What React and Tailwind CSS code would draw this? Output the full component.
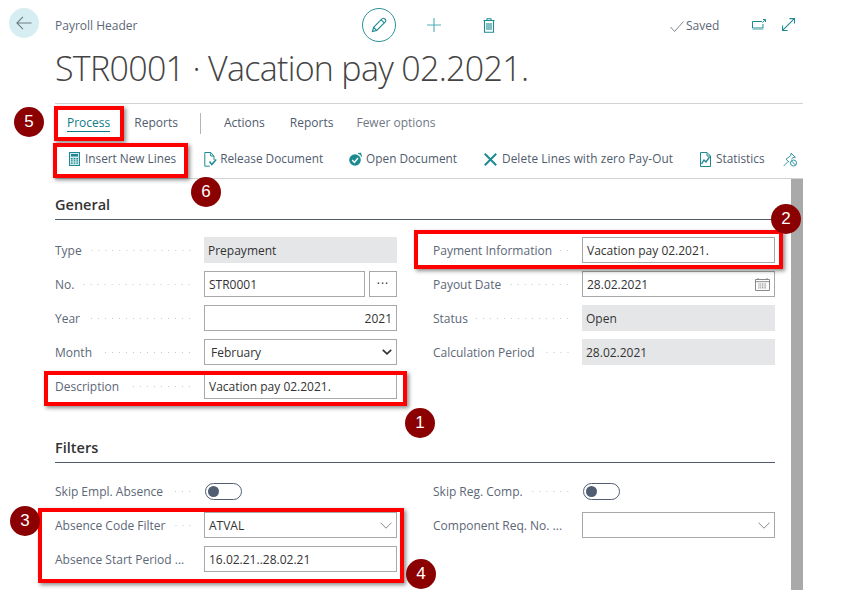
const TEAL = "#1d8a91";

function BackIcon() {
  return (
    <svg width="16" height="14" viewBox="0 0 16 14" fill="none" stroke="#6f7c85" strokeWidth="1.1">
      <path d="M15.5 7H1M7 .8 .9 7 7 13.2" />
    </svg>
  );
}

function PencilIcon() {
  return (
    <svg width="16" height="16" viewBox="0 0 16 16" fill="none" stroke={TEAL} strokeWidth="1.1">
      <path d="M1.5 14.5 2.6 10.3 11.2 1.7a1.6 1.6 0 0 1 2.3 0l.8.8a1.6 1.6 0 0 1 0 2.3L5.7 13.4 1.5 14.5ZM2.6 10.3l3.1 3.1M10.2 2.8l3 3" />
    </svg>
  );
}

function PlusIcon() {
  return (
    <svg width="14" height="14" viewBox="0 0 14 14" fill="none" stroke="#4fb0b5" strokeWidth="1.1">
      <path d="M7 0v14M0 7h14" />
    </svg>
  );
}

function TrashIcon() {
  return (
    <svg width="12" height="15" viewBox="0 0 12 15" fill="none" stroke={TEAL} strokeWidth="1.1">
      <path d="M.5 2.5h11M4 2.5V.8h4v1.7M1.5 2.5v11.7h9V2.5M4 5v7M6 5v7M8 5v7" />
    </svg>
  );
}

function ShareIcon() {
  return (
    <svg width="14" height="11" viewBox="0 0 14 11" fill="none" stroke={TEAL} strokeWidth="1">
      <path d="M10 2.500H.5v6.500h10.500V5" />
      <path d="M.5 10.500h11" stroke="#9fd0d3" />
      <path d="M10.500 3.500 13 .8M11 .5h2.500V3" />
    </svg>
  );
}

function ExpandIcon() {
  return (
    <svg width="13" height="13" viewBox="0 0 13 13" fill="none" stroke={TEAL} strokeWidth="1.1">
      <path d="M.8 12.200 12.200.8M7.500.6h5v5M.6 7.500v5h5" />
    </svg>
  );
}

function CalcIcon() {
  return (
    <svg width="11" height="14" viewBox="0 0 11 14" fill="none">
      <rect x=".5" y=".5" width="10" height="13" fill="#d3e8ea" stroke={TEAL} />
      <rect x="2" y="2" width="7" height="2.500" fill={TEAL} />
      <path d="M2 6h1.600v1.400H2zM4.700 6h1.600v1.400H4.700zM7.400 6H9v1.400H7.400zM2 8.200h1.600v1.400H2zM4.700 8.200h1.600v1.400H4.700zM7.400 8.200H9v1.400H7.400zM2 10.400h1.600v1.400H2zM4.700 10.400h1.600v1.400H4.700zM7.400 10.400H9v1.400H7.400z" fill={TEAL} />
    </svg>
  );
}

function ReleaseIcon() {
  return (
    <svg width="13" height="15" viewBox="0 0 13 15" fill="none" stroke={TEAL} strokeWidth="1">
      <path d="M10 8V4L6.700.5H.8v13.700h5M6.700.5V4H10" />
      <path d="m5.500 9.500 2.300 3 4.400-5" strokeWidth="1.500" />
    </svg>
  );
}

function OpenDocIcon() {
  return (
    <svg width="14" height="14" viewBox="0 0 14 14" fill="none">
      <circle cx="6" cy="8" r="5.800" fill={TEAL} />
      <path d="m3.200 8 2.200 2.400L9 6" stroke="#fff" strokeWidth="1.400" />
      <path d="M9 1.500a3 3 0 0 1 3.500 3" stroke={TEAL} strokeWidth="1.200" />
      <path d="m11 .2 1.600 1.600-1.800 1" fill={TEAL} />
    </svg>
  );
}

function DeleteIcon() {
  return (
    <svg width="13" height="13" viewBox="0 0 13 13" fill="none" stroke={TEAL} strokeWidth="2">
      <path d="m.8.8 11.400 11.400M12.200.8.8 12.200" />
    </svg>
  );
}

function StatsIcon() {
  return (
    <svg width="11" height="15" viewBox="0 0 11 15" fill="none" stroke={TEAL} strokeWidth="1">
      <path d="M.5.5h6.500L10.500 4v10.500H.5z" />
      <path d="M7 .5V4h3.500" />
      <path d="m1.500 12 2.500-4 2 2 3.500-5" strokeWidth="1.400" />
    </svg>
  );
}

function PinIcon() {
  return (
    <svg width="14" height="15" viewBox="0 0 14 15" fill="none" stroke={TEAL} strokeWidth=".9">
      <path d="M.7 14 5 9.600M3 7.200l4.800-3.600.2-2.400 4.400 4-2.400.4-1.600 1.600M3 7.200l3.200 3" />
      <circle cx="10.500" cy="11" r="3" />
      <path d="m8.500 9 4 4" />
    </svg>
  );
}

function CalendarIcon() {
  return (
    <svg width="15" height="13" viewBox="0 0 15 13" fill="none" stroke="#7d7d7d" strokeWidth=".9">
      <path d="M.5 1.500h14v11H.5zM.5 3.700h14M3 0v1.500M12 0v1.500" />
      <path d="M3 6h9M3 8h9M3 10h9M5 5.500v5.500M7.500 5.500v5.500M10 5.500v5.500" strokeWidth=".7" strokeDasharray="1 .8" />
    </svg>
  );
}

function ThinChevron() {
  return (
    <svg width="12" height="7" viewBox="0 0 12 7" fill="none" stroke="#7a7a7a" strokeWidth=".9">
      <path d="m.5.7 5.500 5.500L11.500.7" />
    </svg>
  );
}

function BoldChevron() {
  return (
    <svg width="10" height="6" viewBox="0 0 10 6" fill="none" stroke="#333" strokeWidth="1.700">
      <path d="m.8.8 4.200 4 4.200-4" />
    </svg>
  );
}

function Leader() {
  return <span className="mx-2 h-[3px] flex-1 bg-[radial-gradient(circle,#c3c7cd_0.8px,transparent_1px)] bg-[length:7px_3px] bg-right" />;
}

function Label({ text }) {
  return (
    <div className="flex w-[149px] shrink-0 items-center pr-[3px] pt-px text-[#5c6777]">
      <span className="whitespace-nowrap">{text}</span>
      <Leader />
    </div>
  );
}

function Field({ label, value, right, readOnly, icon, children }) {
  return (
    <div className="flex h-[26px] items-center">
      <Label text={label} />
      {children ?? (
        <div
          className={[
            "flex h-[26px] w-[193px] items-center justify-between px-1 text-[#333]",
            readOnly ? "bg-[#e5e6e8]" : "border border-[#a8a8a8]",
          ].join(" ")}
        >
          <span className={right ? "ml-auto pt-px" : "pt-px"}>{value}</span>
          {icon}
        </div>
      )}
    </div>
  );
}

function Toggle() {
  return (
    <div className="ml-px flex h-[17px] w-[37px] items-center rounded-full border-[1.5px] border-[#505d72] pl-[2px]">
      <span className="h-[11px] w-[11px] rounded-full bg-[#505d72]" />
    </div>
  );
}

function Action({ icon, label, className = "gap-1", labelClass = "" }) {
  return (
    <div className={`flex items-center whitespace-nowrap ${className}`}>
      {icon}
      <span className={labelClass}>{label}</span>
    </div>
  );
}

function SectionTitle({ children }) {
  return (
    <div className="flex h-[41px] items-end border-b border-[#505c6d] pb-[7px] text-[14.5px] font-semibold leading-none text-[#333]">
      {children}
    </div>
  );
}

function RedBox({ className }) {
  return <div className={`absolute border-[4px] border-[#ff0000] shadow-[2px_2px_4px_rgba(0,0,0,0.45)] ${className}`} />;
}

function Badge({ n, className }) {
  return (
    <div className={`absolute flex h-[30px] w-[30px] items-center justify-center rounded-full bg-[#8b0000] font-['Liberation_Sans',sans-serif] text-[17px] text-white ${className}`}>
      {n}
    </div>
  );
}

export default function App() {
  return (
    <div className="relative h-[590px] w-[856px] overflow-hidden bg-white font-['Open_Sans',sans-serif] text-[12px] text-[#505c6d]">
      <div className="flex h-[179px] flex-col pl-[9px]">
        <div className="flex h-[50px] shrink-0 items-start pt-2">
          <div className="flex h-[30px] w-[30px] items-center justify-center rounded-full bg-[#d6eef1]">
            <BackIcon />
          </div>
          <div className="ml-4 mt-[10px] w-[307px] leading-4 text-[#5c6777]">Payroll Header</div>
          <div className="flex h-[34px] w-[34px] items-center justify-center rounded-full border border-[#2a9298]">
            <PencilIcon />
          </div>
          <div className="ml-[31px] mt-[10px]"><PlusIcon /></div>
          <div className="ml-[42px] mt-[10px]"><TrashIcon /></div>
          <div className="ml-[175px] mt-[10px] flex items-center gap-[2px] text-[#5c6777]">
            <svg width="14" height="11" viewBox="0 0 14 11" fill="none" stroke="#6f7c85" strokeWidth=".9"><path d="m.5 6 4 4.500L13.500.5" /></svg>
            <span className="leading-4">Saved</span>
          </div>
          <div className="ml-[33px] mt-[11px]"><ShareIcon /></div>
          <div className="ml-[16px] mt-[10px]"><ExpandIcon /></div>
        </div>

        <div className="ml-[46px] h-[54px] w-[748px] shrink-0 whitespace-nowrap border-b border-[#d2d2d6] text-[34px] font-light leading-[36px] tracking-[-0.7px] text-[#444]">
          STR0001 · Vacation pay 02.2021.
        </div>

        <div className="ml-[46px] flex h-[37px] w-[748px] shrink-0 items-center pl-3 pt-[1px]">
          <span className="border-b border-[#0f7c85] leading-[17px] text-[#0f7c85]">Process</span>
          <span className="ml-6">Reports</span>
          <span className="ml-[22px] h-[21px] w-px bg-[#b5b5b5]" />
          <span className="ml-[23px]">Actions</span>
          <span className="ml-[25px]">Reports</span>
          <span className="ml-[23px] text-[#6f7985]">Fewer options</span>
        </div>

        <div className="ml-[46px] flex h-[38px] w-[748px] shrink-0 items-center gap-[26px] border-b border-[#d2d2d6] pl-[14px] pb-px text-[11.8px]">
          <Action icon={<CalcIcon />} label="Insert New Lines" className="gap-[5px]" />
          <Action icon={<ReleaseIcon />} label="Release Document" className="ml-[2px] gap-[3px]" />
          <Action icon={<OpenDocIcon />} label="Open Document" className="gap-[3px]" />
          <Action icon={<DeleteIcon />} label="Delete Lines with zero Pay-Out" className="ml-px gap-[5px]" labelClass="tracking-[0.1px]" />
          <Action icon={<StatsIcon />} label="Statistics" className="ml-px gap-[5px]" />
          <div className="-ml-2"><PinIcon /></div>
        </div>
      </div>

      <div className="flex h-[411px] pl-[55px]">
        <div className="w-[720px]">
          <SectionTitle>General</SectionTitle>
          <div className="grid grid-cols-[342px_342px] gap-x-9 pt-[17px]">
            <div className="flex flex-col gap-2">
              <Field label="Type" value="Prepayment" readOnly />
              <Field label="No.">
                <div className="flex gap-1">
                  <div className="flex h-[26px] w-[161px] items-center border border-[#a8a8a8] px-1 pt-px text-[#333]">STR0001</div>
                  <div className="flex h-[26px] w-[28px] items-center justify-center border border-[#a8a8a8] tracking-[1px] text-[#333]">···</div>
                </div>
              </Field>
              <Field label="Year" value="2021" right />
              <Field label="Month" value={<span className="ml-0.5">February</span>} icon={<BoldChevron />} />
              <Field label="Description" value="Vacation pay 02.2021." />
            </div>
            <div className="flex flex-col gap-2">
              <Field label="Payment Information" value="Vacation pay 02.2021." />
              <Field label="Payout Date" value="28.02.2021" icon={<CalendarIcon />} />
              <Field label="Status" value="Open" readOnly />
              <Field label="Calculation Period" value="28.02.2021" readOnly />
            </div>
          </div>

          <div className="mt-[23px]">
            <SectionTitle>Filters</SectionTitle>
          </div>
          <div className="grid grid-cols-[342px_342px] gap-x-9 pt-[15px]">
            <div className="flex flex-col gap-2">
              <Field label="Skip Empl. Absence"><Toggle /></Field>
              <Field label="Absence Code Filter" value="ATVAL" icon={<ThinChevron />} />
              <Field label="Absence Start Period ..." value="16.02.21..28.02.21" />
            </div>
            <div className="flex flex-col gap-2">
              <Field label="Skip Reg. Comp."><Toggle /></Field>
              <Field label="Component Req. No. ..." value="" icon={<ThinChevron />} />
            </div>
          </div>
        </div>
        <div className="ml-4 w-3 bg-[#a9a9a9]" />
      </div>

      {/* annotations drawn on top of the page */}
      <RedBox className="left-[54px] top-[106px] h-[35px] w-[70px]" />
      <RedBox className="left-[53px] top-[143px] h-[35px] w-[135px]" />
      <RedBox className="left-[44px] top-[371px] h-[35px] w-[363px]" />
      <RedBox className="left-[414px] top-[230px] h-[39px] w-[369px]" />
      <RedBox className="left-[38px] top-[508px] h-[75px] w-[366px]" />
      <Badge n="5" className="left-[14px] top-[107px]" />
      <Badge n="6" className="left-[191px] top-[177px]" />
      <Badge n="1" className="left-[405px] top-[408px]" />
      <Badge n="2" className="left-[771px] top-[204px]" />
      <Badge n="3" className="left-[10px] top-[506px]" />
      <Badge n="4" className="left-[406px] top-[559px]" />
    </div>
  );
}
